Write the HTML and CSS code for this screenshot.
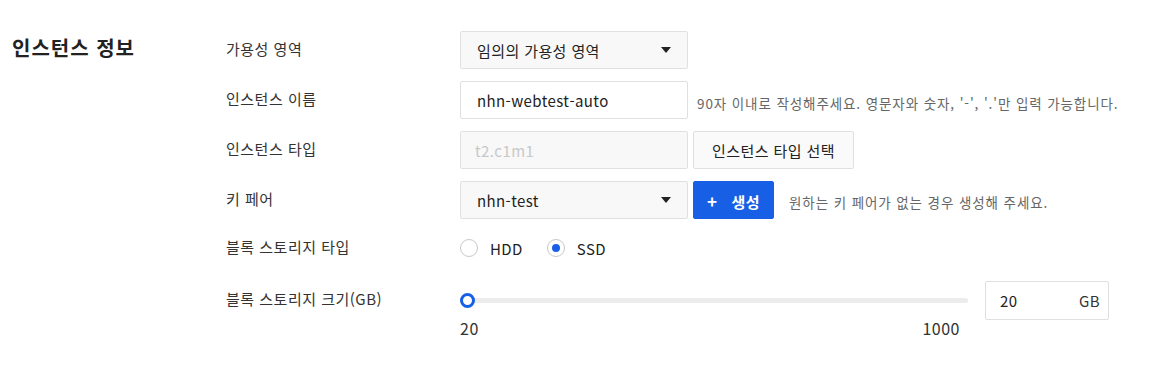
FILE: index.html
```html
<!DOCTYPE html>
<html lang="ko">
<head>
    <meta charset="UTF-8">
    <title>인스턴스 정보</title>
    <link rel="stylesheet" href="styles.css">
</head>
<body>
    <div class="section">
        <h2 class="section-title">인스턴스 정보</h2>
        <div class="form">
            <div class="row">
                <div class="label">가용성 영역</div>
                <div class="control">
                    <div class="select"><span>임의의 가용성 영역</span><i class="caret"></i></div>
                </div>
            </div>
            <div class="row">
                <div class="label">인스턴스 이름</div>
                <div class="control">
                    <div class="input">nhn-webtest-auto</div>
                    <span class="hint hint-near">90자 이내로 작성해주세요. 영문자와 숫자, '-', '.'만 입력 가능합니다.</span>
                </div>
            </div>
            <div class="row">
                <div class="label">인스턴스 타입</div>
                <div class="control">
                    <div class="input disabled">t2.c1m1</div>
                    <button class="btn">인스턴스 타입 선택</button>
                </div>
            </div>
            <div class="row">
                <div class="label">키 페어</div>
                <div class="control">
                    <div class="select"><span>nhn-test</span><i class="caret"></i></div>
                    <button class="btn btn-primary"><span class="plus">+</span>생성</button>
                    <span class="hint">원하는 키 페어가 없는 경우 생성해 주세요.</span>
                </div>
            </div>
            <div class="row row-radio">
                <div class="label">블록 스토리지 타입</div>
                <div class="control">
                    <label class="radio"><i class="radio-mark"></i>HDD</label>
                    <label class="radio checked"><i class="radio-mark"></i>SSD</label>
                </div>
            </div>
            <div class="row row-slider">
                <div class="label">블록 스토리지 크기(GB)</div>
                <div class="control">
                    <div class="slider">
                        <div class="track"><i class="thumb"></i></div>
                        <div class="scale"><span>20</span><span>1000</span></div>
                    </div>
                    <div class="size-box"><span>20</span><span class="unit">GB</span></div>
                </div>
            </div>
        </div>
    </div>
</body>
</html>
```

FILE: styles.css
```css
* {
    margin: 0;
    padding: 0;
    box-sizing: border-box;
    font-family: 'Noto Sans CJK KR', 'Noto Sans', sans-serif;
}

body {
    background: #fff;
    color: #333;
}

.section {
    display: flex;
    padding: 31px 0 0 12px;
}

.section-title {
    width: 214px;
    font-size: 20px;
    font-weight: 700;
    letter-spacing: 1px;
    color: #222;
    line-height: 34px;
}

.row {
    display: flex;
    align-items: center;
    height: 38px;
    margin-bottom: 12px;
}

.label {
    width: 234px;
    font-size: 15px;
    letter-spacing: 0.5px;
    color: #333;
    margin-top: -3px;
}

.control {
    display: flex;
    align-items: center;
}

.select,
.input {
    width: 228px;
    height: 38px;
    border: 1px solid #e0e0e0;
    border-radius: 2px;
    padding: 0 16px;
    font-size: 15px;
    letter-spacing: 0.4px;
    color: #222;
    display: flex;
    align-items: center;
}

.select {
    background: #f8f8f8;
    justify-content: space-between;
    padding-right: 16px;
}

.caret {
    width: 0;
    height: 0;
    border-left: 5px solid transparent;
    border-right: 5px solid transparent;
    border-top: 6px solid #222;
}

.input {
    background: #fff;
}

.input.disabled {
    background: #f8f8f8;
    color: #c8c8c8;
    padding-left: 14px;
}

.btn {
    height: 38px;
    width: 161px;
    margin-left: 5px;
    padding: 0;
    border: 1px solid #e0e0e0;
    border-radius: 2px;
    background: #fafafa;
    font-size: 15px;
    letter-spacing: 0.4px;
    color: #222;
    font-weight: 400;
}

.btn-primary {
    width: 81px;
    background: #1760e6;
    border-color: #1760e6;
    color: #fff;
    font-weight: 700;
}

.plus {
    font-size: 17px;
    margin-right: 14px;
}

.hint {
    font-size: 13.5px;
    letter-spacing: 0.9px;
    color: #666;
    margin-left: 15px;
    margin-top: 3px;
}

.hint-near {
    margin-left: 9px;
    margin-top: 6px;
}

.row-radio {
    height: 32px;
    padding-top: 2px;
    margin-bottom: 18px;
}

.radio {
    display: flex;
    align-items: center;
    font-size: 15px;
    letter-spacing: 0.4px;
    color: #222;
    margin-right: 24px;
}

.radio-mark {
    width: 18px;
    height: 18px;
    border: 1px solid #c8c8c8;
    border-radius: 50%;
    margin-right: 12px;
    position: relative;
    background: #fff;
}

.radio.checked .radio-mark::after {
    content: '';
    position: absolute;
    left: 4px;
    top: 4px;
    width: 8px;
    height: 8px;
    border-radius: 50%;
    background: #1760e6;
}

.row-slider {
    align-items: flex-start;
    height: auto;
}

.row-slider .label {
    margin-top: 7px;
}

.row-slider .control {
    align-items: flex-start;
}

.slider {
    width: 508px;
    padding-top: 17px;
}

.track {
    position: relative;
    height: 5px;
    margin-left: 7px;
    background: #ececec;
    border-radius: 3px;
}

.thumb {
    position: absolute;
    left: -7px;
    top: -5px;
    width: 15px;
    height: 15px;
    border: 3px solid #1760e6;
    border-radius: 50%;
    background: #fff;
}

.scale {
    display: flex;
    justify-content: space-between;
    font-size: 16px;
    letter-spacing: 0.5px;
    line-height: 22px;
    color: #333;
    margin-top: 14px;
    padding-right: 8px;
}

.size-box {
    width: 124px;
    height: 39px;
    margin-left: 17px;
    border: 1px solid #e0e0e0;
    border-radius: 2px;
    display: flex;
    align-items: center;
    justify-content: space-between;
    padding: 0 8px 0 14px;
    font-size: 15px;
    letter-spacing: 0.4px;
    color: #222;
}

.unit {
    color: #333;
}
```
